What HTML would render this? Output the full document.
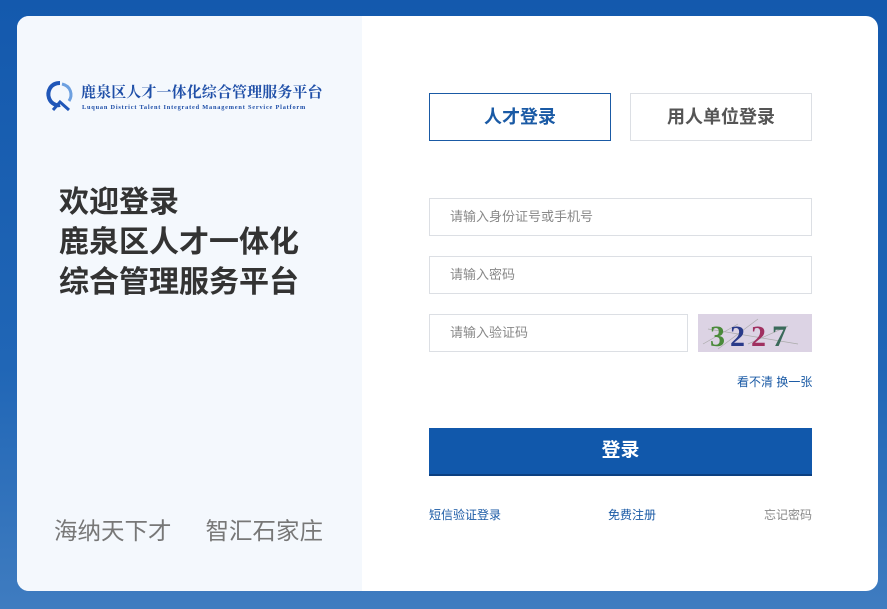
<!DOCTYPE html>
<html><head><meta charset="utf-8"><style>
*{margin:0;padding:0;box-sizing:border-box}
body{width:887px;height:609px;overflow:hidden;background:linear-gradient(180deg,#1459ad 0%,#2066b6 60%,#3f7cc0 100%);font-family:"Liberation Sans","Noto Sans CJK SC",sans-serif;position:relative}
.card{position:absolute;left:17px;top:16px;width:861px;height:575px;background:#fff;border-radius:12px;overflow:hidden}
.left{position:absolute;left:0;top:0;width:345px;height:575px;background:#f4f8fd}
.abs{position:absolute}
.tab{position:absolute;top:77px;height:48px;width:182px;text-align:center;line-height:46px;font-size:18px;font-weight:bold}
.inp{position:absolute;left:412px;height:38px;border:1px solid #dcdfe4;font-size:13px;color:#888;line-height:36px;padding-left:20px}
</style></head><body>
<div class="card">
 <div class="left">
  <svg class="abs" style="left:28px;top:64px" width="30" height="32" viewBox="0 0 30 32"><path d="M15 3 C5 3 2 12 4 18 C6 24 12 26 15 25" fill="none" stroke="#1f56b8" stroke-width="4"/><path d="M17 4 C26 6 28 15 24 21" fill="none" stroke="#6da0e0" stroke-width="3"/><path d="M8 30 L15 22 L24 30" fill="none" stroke="#1f56b8" stroke-width="3"/></svg>
  <div class="abs" style="left:64px;top:65px;font-size:15px;font-weight:bold;color:#1f4fa8;font-family:'Noto Serif CJK SC',serif;letter-spacing:0.1px">鹿泉区人才一体化综合管理服务平台</div>
  <div class="abs" style="left:65px;top:88px;font-size:6.3px;color:#1f4fa8;font-family:'Liberation Serif',serif;font-weight:bold;letter-spacing:0.8px;white-space:nowrap">Luquan District Talent Integrated Management Service Platform</div>
  <div class="abs" style="left:42px;top:167px;font-size:30px;font-weight:bold;color:#333;line-height:40px;white-space:nowrap">欢迎登录<br>鹿泉区人才一体化<br>综合管理服务平台</div>
  <div class="abs" style="left:37px;top:496px;font-size:23.5px;color:#777;white-space:nowrap">海纳天下才<span style="display:inline-block;width:34px"></span>智汇石家庄</div>
 </div>
 <div class="tab" style="left:412px;border:1px solid #1a5aa5;color:#1a5aa5">人才登录</div>
 <div class="tab" style="left:613px;border:1px solid #dcdfe4;color:#555">用人单位登录</div>
 <div class="inp" style="top:182px;width:383px">请输入身份证号或手机号</div>
 <div class="inp" style="top:240px;width:383px">请输入密码</div>
 <div class="inp" style="top:298px;width:259px">请输入验证码</div>
 <div class="abs" style="left:681px;top:298px;width:114px;height:38px;background:#dcd3e4;overflow:hidden">
  <svg width="114" height="38"><path d="M5 30 L40 10 M20 35 L60 5 M50 30 L90 12 M10 15 L100 30" stroke="#aaa" stroke-width="0.7" fill="none"/>
  <g font-size="30" font-family="Liberation Serif" font-weight="bold"><text x="12" y="32" fill="#4a8a3a">3</text><text x="32" y="32" fill="#2a3a8a">2</text><text x="53" y="32" fill="#a03060">2</text><text x="74" y="32" fill="#3a6a5a">7</text></g></svg>
 </div>
 <div class="abs" style="left:720px;top:357px;font-size:12px;color:#1a5aa5">看不清 换一张</div>
 <div class="abs" style="left:412px;top:412px;width:383px;height:48px;background:#1158ab;border-bottom:2px solid #0b3f80;color:#fff;font-size:19px;font-weight:bold;text-align:center;line-height:46px">登录</div>
 <div class="abs" style="left:412px;top:490px;font-size:12px;color:#1a5aa5">短信验证登录</div>
 <div class="abs" style="left:591px;top:490px;font-size:12px;color:#1a5aa5">免费注册</div>
 <div class="abs" style="left:747px;top:490px;font-size:12px;color:#888">忘记密码</div>
</div>
</body></html>
